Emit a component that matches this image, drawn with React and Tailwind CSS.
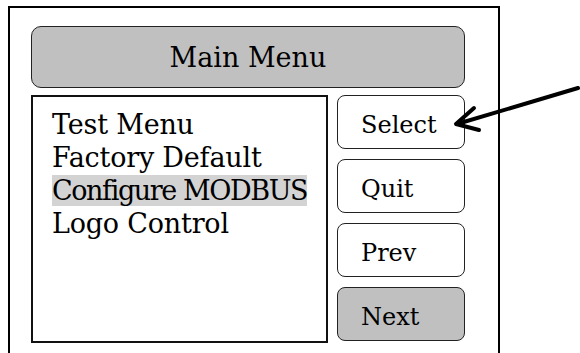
import React from 'react'

const ITEMS = ['Test Menu', 'Factory Default', 'Configure MODBUS', 'Logo Control']
const BUTTONS = [
  { label: 'Select', active: false },
  { label: 'Quit', active: false },
  { label: 'Prev', active: false },
  { label: 'Next', active: true },
]

const App = () => {
  return (
    <div className="relative w-[580px] h-[353px] overflow-hidden bg-white pl-[8px] pt-[6px] text-black font-['DejaVu_Serif',serif]">
      <div className="w-[492px] h-[360px] border-2 border-b-0 border-black pl-[21px] pt-[18px]">
        {/* Title bar */}
        <div className="w-[434px] h-[62px] rounded-[10px] border-[1.5px] border-[#222] bg-[#c0c0c0] flex items-center justify-center pt-[3px]">
          <span className="text-[27px]">Main Menu</span>
        </div>

        <div className="flex gap-[9px] mt-[7px]">
          {/* Menu list */}
          <div className="w-[297px] h-[248px] border-2 border-[#111] pl-[19px] pt-[11px] text-[27px] leading-[33px] tracking-[-0.2px] whitespace-nowrap">
            {ITEMS.map((item, i) => (
              <div key={item}>
                {i === 2 ? (
                  <span className="bg-[#d3d3d3] tracking-[-1.4px]">{item}</span>
                ) : (
                  <span>{item}</span>
                )}
              </div>
            ))}
          </div>

          {/* Buttons */}
          <div className="w-[128px] flex flex-col gap-[10px]">
            {BUTTONS.map((b) => (
              <div
                key={b.label}
                className={`h-[54px] rounded-[8px] border-[1.5px] border-[#222] flex items-center pl-[23px] pt-[5px] text-[24px] ${b.active ? 'bg-[#c0c0c0]' : 'bg-white'}`}
              >
                {b.label}
              </div>
            ))}
          </div>
        </div>
      </div>

      {/* Pointer arrow */}
      <svg className="absolute left-0 top-0" width="580" height="353" viewBox="0 0 580 353">
        <g stroke="#000" strokeWidth="4" strokeLinecap="round" fill="none">
          <line x1="578" y1="88" x2="457" y2="124" />
          <polyline points="474,108 456,124 479,130" strokeLinejoin="round" />
        </g>
      </svg>
    </div>
  )
}

export default App
